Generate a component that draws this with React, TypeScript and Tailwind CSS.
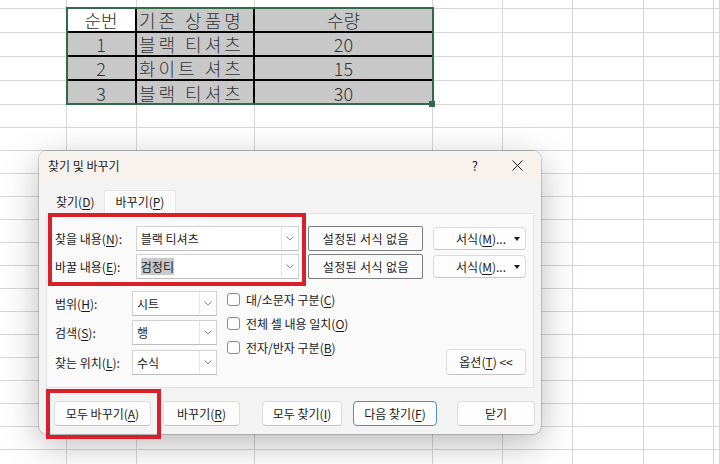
import React from 'react';

const ROW_COUNT = 22;
const COL_COUNT = 9;

const HEADER = ['순번', '기존 상품명', '수량'];
const DATA = [
  ['1', '블랙 티셔츠', '20'],
  ['2', '화이트 셔츠', '15'],
  ['3', '블랙 티셔츠', '30'],
];

// mnemonic letter, underlined like the Windows dialog
const K: React.FC<{ k: string }> = ({ k }) => (
  <>
    (<span className="underline underline-offset-[2px]">{k}</span>)
  </>
);

const Chevron: React.FC = () => (
  <svg width="8" height="5" viewBox="0 0 8 5" fill="none">
    <path d="M0.5 0.5 L4 4 L7.5 0.5" stroke="#8a8a8a" strokeWidth="1" />
  </svg>
);

const Combo: React.FC<{ value: React.ReactNode; width: string }> = ({ value, width }) => (
  <div className={`${width} h-[25px] flex items-stretch bg-white border border-[#d2d2d2] border-b-[#bdbdbd]`}>
    <div className="flex-1 flex items-center pl-[4px]">{value}</div>
    <div className="w-[17px] flex items-center justify-center border-l border-[#e6e6e6]">
      <Chevron />
    </div>
  </div>
);

const Check: React.FC<{ label: React.ReactNode }> = ({ label }) => (
  <div className="h-[17px] flex items-center gap-[6px]">
    <div className="w-[13px] h-[13px] rounded-[3px] border border-[#8d8d8d] bg-white" />
    <span>{label}</span>
  </div>
);

const Btn: React.FC<{ children: React.ReactNode; className: string }> = ({ children, className }) => (
  <div
    className={`h-[25px] flex items-center justify-center rounded-[4px] bg-[#fdfdfd] border border-[#dcdcdc] border-b-[#c6c6c6] ${className}`}
  >
    {children}
  </div>
);

const FormatBtn: React.FC = () => (
  <Btn className="ml-[10px] w-[93px] !h-[23px] !justify-end pr-[5px]">
    서식<K k="M" />...
    <svg className="ml-[8px]" width="6" height="4" viewBox="0 0 6 4">
      <path d="M0 0 H6 L3 4 Z" fill="#1b1b1b" />
    </svg>
  </Btn>
);

const Sheet: React.FC = () => {
  const cells = [];
  for (let r = 0; r < ROW_COUNT; r++) {
    for (let c = 0; c < COL_COUNT; c++) {
      const inTable = r >= 1 && r <= 4 && c >= 1 && c <= 3;
      if (!inTable) {
        cells.push(<div key={`${r}-${c}`} className="border-r border-b border-[#d6d6d6]" />);
        continue;
      }
      const text = r === 1 ? HEADER[c - 1] : DATA[r - 2][c - 1];
      const bg = r === 1 && c === 1 ? 'bg-white' : 'bg-[#c8c8c8]';
      const bottom = r < 4 ? 'border-b-2 border-b-black' : 'border-b border-b-[#d6d6d6]';
      const right = c < 3 ? 'border-r-2 border-r-black' : 'border-r border-r-[#d6d6d6]';
      const align = c === 2 ? 'justify-start pl-[2px] tracking-[3px]' : 'justify-center';
      cells.push(
        <div key={`${r}-${c}`} className={`flex items-center ${bg} ${bottom} ${right} ${align}`}>
          {text}
        </div>
      );
    }
  }

  return (
    <div className="relative">
      <div className="grid grid-cols-[67px_70px_118px_178px_70px_70px_71px_70px_1fr] grid-rows-[9px_24px_24px_24px_24px_repeat(17,23px)] font-['Noto_Sans_CJK_KR',sans-serif] font-light text-[18px] leading-[20px] text-[#333333]">
        {cells}
      </div>
      {/* selection outline */}
      <div className="absolute left-[66px] top-[7px] w-[368px] h-[98px] border-2 border-[#2f6b45]" />
      <div className="absolute left-[429px] top-[101px] w-[6px] h-[6px] bg-[#2f6b45]" />
    </div>
  );
};

const Dialog: React.FC = () => (
  <div className="absolute left-[39px] top-[151px] w-[502px] h-[283px] rounded-[8px] overflow-hidden bg-[#f3f3f3] shadow-[0_0_0_1px_rgba(0,0,0,0.16),0_10px_36px_rgba(0,0,0,0.28)] font-['Noto_Sans_CJK_KR',sans-serif] text-[12px] text-[#1b1b1b] flex flex-col">
    {/* title bar */}
    <div className="h-[29px] shrink-0 bg-[#f8f2ef] flex items-center pl-[9px]">
      <span>찾기 및 바꾸기</span>
      <span className="ml-auto text-[13px]">?</span>
      <svg className="ml-[34px] mr-[18px]" width="11" height="11" viewBox="0 0 11 11">
        <path d="M0.5 0.5 L10.5 10.5 M10.5 0.5 L0.5 10.5" stroke="#1b1b1b" strokeWidth="1" />
      </svg>
    </div>

    {/* tabs */}
    <div className="mt-[10px] ml-[7px] flex h-[23px]">
      <div className="w-[58px] flex items-center pl-[10px]">
        찾기<K k="D" />
      </div>
      <div className="w-[72px] flex items-center justify-center bg-[#fafafa] border border-b-0 border-[#e6e6e6]">
        바꾸기<K k="P" />
      </div>
    </div>

    {/* tab panel */}
    <div className="mx-[7px] h-[175px] shrink-0 bg-[#fafafa] border border-[#e3e3e3] pl-[8px] pr-[7px] pt-[12px]">
      <div className="flex items-center h-[25px]">
        <div className="w-[81px]">
          찾을 내용<K k="N" />:
        </div>
        <Combo width="w-[164px]" value="블랙 티셔츠" />
        <div className="ml-[9px] w-[115px] h-[25px] flex items-center justify-center tracking-[0.4px] bg-[#fbfbfb] border border-[#7c7c7c] rounded-[2px]">
          설정된 서식 없음
        </div>
        <FormatBtn />
      </div>
      <div className="mt-[3px] flex items-center h-[25px]">
        <div className="w-[81px]">
          바꿀 내용<K k="E" />:
        </div>
        <Combo width="w-[164px]" value={<span className="bg-[#c9c9c9] leading-[17px]">검정티</span>} />
        <div className="ml-[9px] w-[115px] h-[25px] flex items-center justify-center tracking-[0.4px] bg-[#fbfbfb] border border-[#7c7c7c] rounded-[2px]">
          설정된 서식 없음
        </div>
        <FormatBtn />
      </div>

      <div className="mt-[12px] flex items-end">
        <div className="flex flex-col gap-[4px]">
          <div className="flex items-center">
            <div className="w-[77px]">
              범위<K k="H" />:
            </div>
            <Combo width="w-[85px]" value="시트" />
          </div>
          <div className="flex items-center">
            <div className="w-[77px]">
              검색<K k="S" />:
            </div>
            <Combo width="w-[85px]" value="행" />
          </div>
          <div className="mt-[1px] flex items-center">
            <div className="w-[77px]">
              찾는 위치<K k="L" />:
            </div>
            <Combo width="w-[85px]" value="수식" />
          </div>
        </div>
        <div className="ml-[10px] self-start flex flex-col gap-[7px]">
          <Check label={<>대/소문자 구분<K k="C" /></>} />
          <Check label={<>전체 셀 내용 일치<K k="O" /></>} />
          <Check label={<>전자/반자 구분<K k="B" /></>} />
        </div>
        <Btn className="ml-auto w-[80px] !h-[26px]">
          옵션<K k="T" /> &lt;&lt;
        </Btn>
      </div>
    </div>

    {/* bottom buttons */}
    <div className="mt-[13px] pl-[15px] flex items-center">
      <Btn className="w-[97px]">
        모두 바꾸기<K k="A" />
      </Btn>
      <Btn className="ml-[12px] w-[77px]">
        바꾸기<K k="R" />
      </Btn>
      <Btn className="ml-[22px] w-[80px]">
        모두 찾기<K k="I" />
      </Btn>
      <Btn className="ml-[11px] w-[84px] !border-[#4b8fcf]">
        다음 찾기<K k="F" />
      </Btn>
      <Btn className="ml-[20px] w-[78px]">닫기</Btn>
    </div>
  </div>
);

const App: React.FC = () => {
  return (
    <div className="relative w-[720px] h-[464px] overflow-hidden bg-white">
      <Sheet />
      <Dialog />
      {/* red annotation boxes */}
      <div className="absolute left-[48px] top-[213px] w-[258px] h-[73px] border-[4px] border-[#d9202a]" />
      <div className="absolute left-[46px] top-[389px] w-[115px] h-[50px] border-[4px] border-[#d9202a]" />
    </div>
  );
};

export default App;
